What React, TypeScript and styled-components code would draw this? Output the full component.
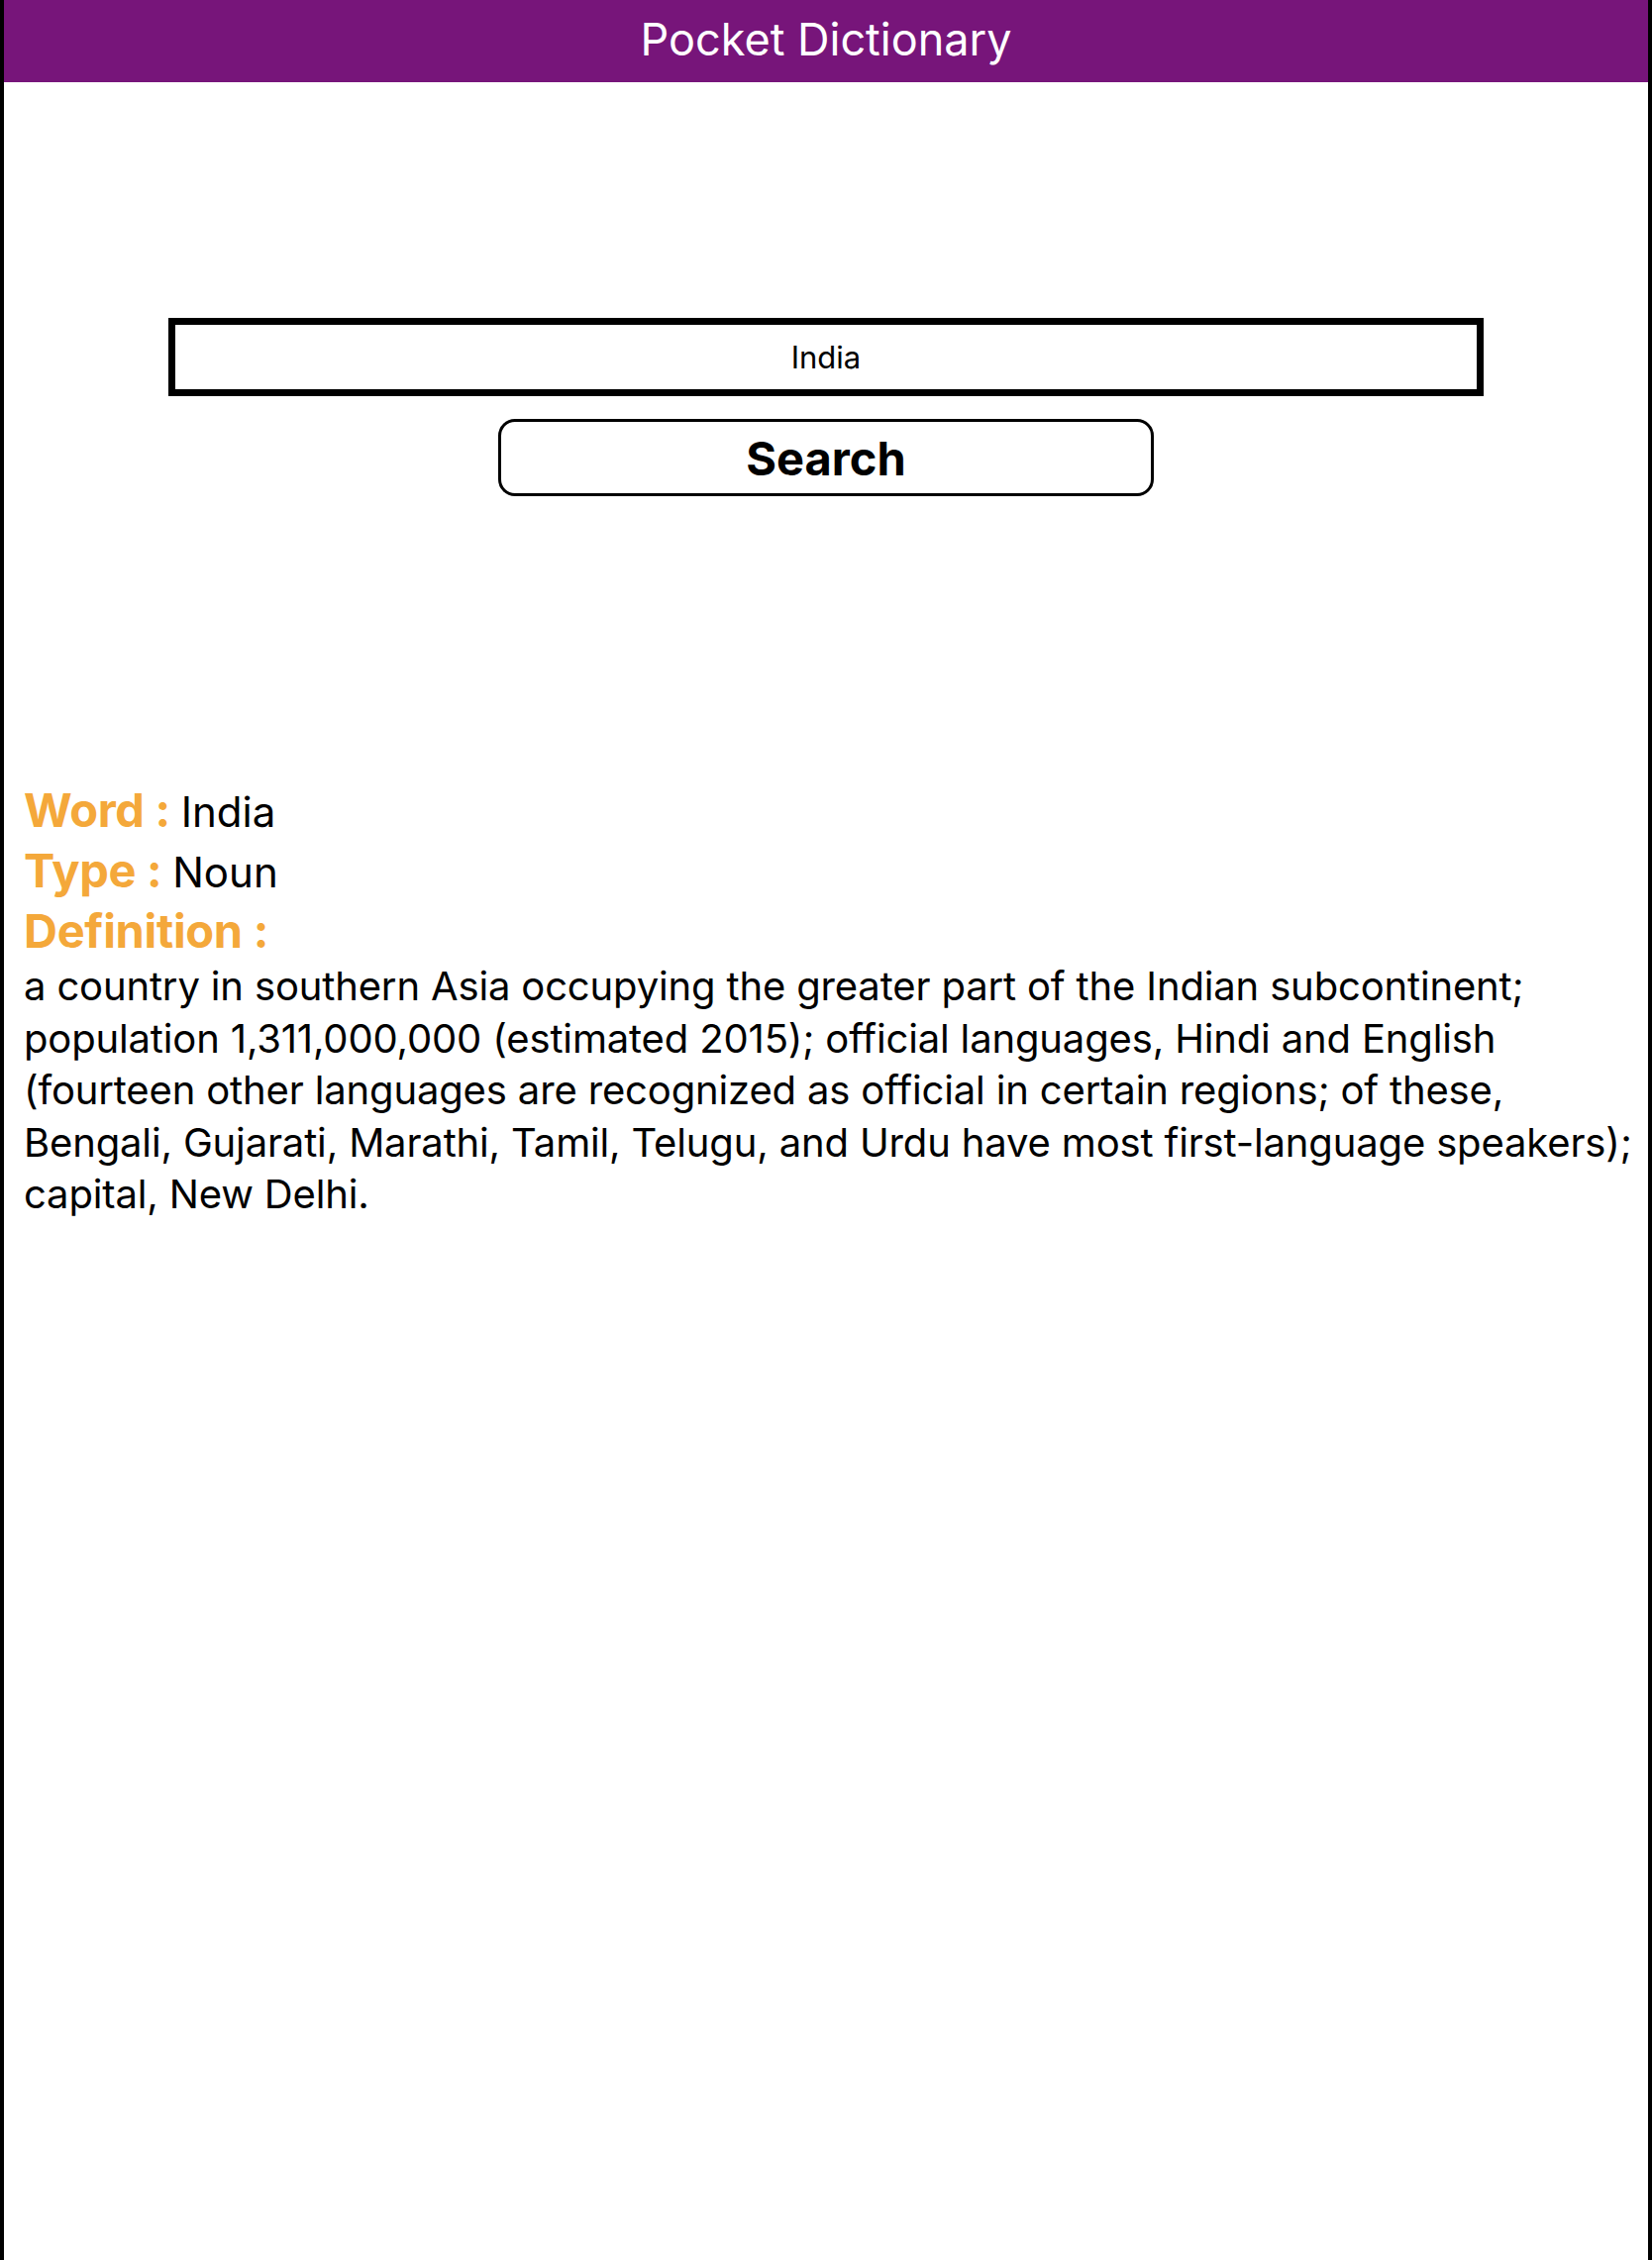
import React from "react";
import styled, { createGlobalStyle } from "styled-components";

const Global = createGlobalStyle`
  html, body { margin: 0; padding: 0; background: #ffffff; }
  body { font-family: Inter, "Noto Sans", "Liberation Sans", sans-serif; }
`;

const Page = styled.div`
  box-sizing: border-box;
  min-height: 2282px;
  border-left: 4px solid #000;
  border-right: 4px solid #000;
  background: #fff;
  display: flex;
  flex-direction: column;
`;

const Header = styled.header`
  box-sizing: border-box;
  height: 83px;
  padding-bottom: 4px;
  background: #77157a;
  color: #fff;
  display: flex;
  align-items: center;
  justify-content: center;
  font-size: 45px;
  font-weight: 400;
`;

const SearchArea = styled.section`
  display: flex;
  flex-direction: column;
  align-items: center;
  padding-top: 238px;
  gap: 23px;
`;

const Input = styled.input`
  box-sizing: border-box;
  width: 1328px;
  height: 79px;
  border: 7px solid #000;
  border-radius: 0;
  text-align: center;
  font-family: Inter, "Noto Sans", sans-serif;
  font-size: 31px;
  color: #000;
  outline: none;
  background: #fff;
`;

const Button = styled.button`
  box-sizing: border-box;
  width: 662px;
  height: 78px;
  border: 3.5px solid #000;
  border-radius: 17px;
  background: #fff;
  font-family: Inter, "Noto Sans", sans-serif;
  font-size: 47px;
  font-weight: 700;
  color: #000;
`;

const Result = styled.section`
  padding: 286px 0 0 20px;
  display: flex;
  flex-direction: column;
`;

const Row = styled.div`
  line-height: 61px;
  height: 61px;
  white-space: nowrap;
`;

const Label = styled.span`
  color: #f4a83a;
  font-weight: 700;
  font-size: 47px;
  letter-spacing: -0.3px;
`;

const Value = styled.span`
  color: #000;
  font-weight: 400;
  font-size: 42px;
`;

const Definition = styled.p`
  margin: 0;
  font-size: 40px;
  line-height: 52.5px;
  letter-spacing: -0.15px;
  color: #000;
`;

export default function App() {
  return (
    <>
      <Global />
      <Page>
        <Header>Pocket Dictionary</Header>
        <SearchArea>
          <Input defaultValue="India" />
          <Button>Search</Button>
        </SearchArea>
        <Result>
          <Row>
            <Label>Word : </Label>
            <Value>India</Value>
          </Row>
          <Row>
            <Label>Type : </Label>
            <Value>Noun</Value>
          </Row>
          <Row>
            <Label>Definition :</Label>
          </Row>
          <Definition>
            a country in southern Asia occupying the greater part of the Indian subcontinent; population 1,311,000,000 (estimated 2015); official languages, Hindi and English (fourteen other languages are recognized as official in certain regions; of these, Bengali, Gujarati, Marathi, Tamil, Telugu, and Urdu have most first-language speakers); capital, New Delhi.
          </Definition>
        </Result>
      </Page>
    </>
  );
}
